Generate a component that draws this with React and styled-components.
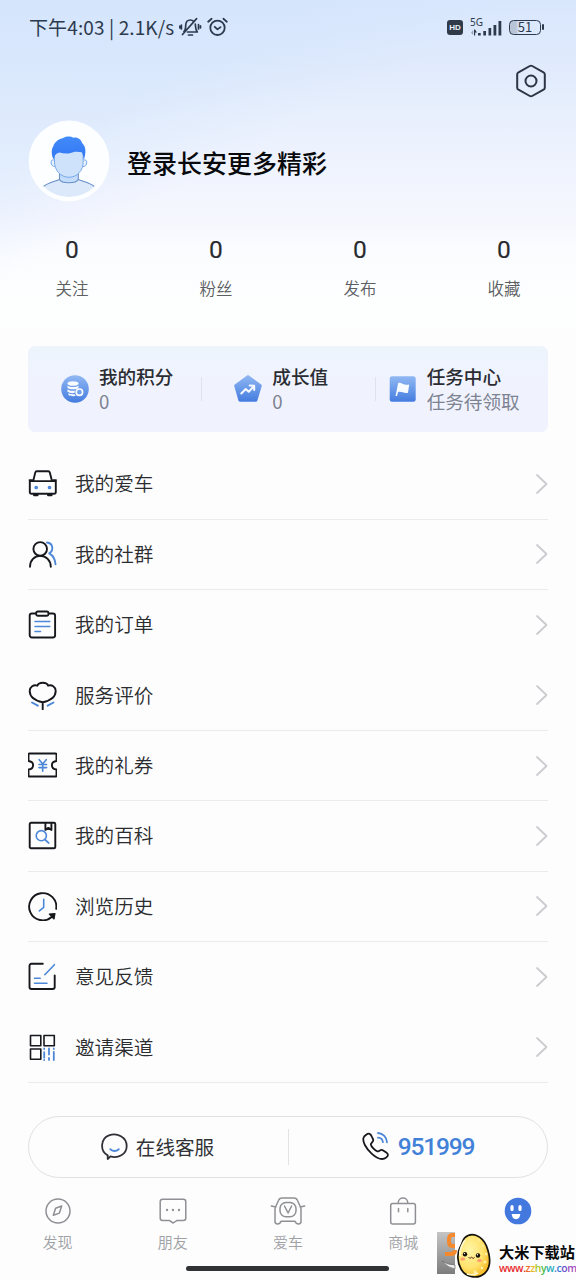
import React from "react";
import styled, { createGlobalStyle, css } from "styled-components";

const Global = createGlobalStyle`
  * { box-sizing: border-box; }
  html, body { margin: 0; padding: 0; }
  body {
    background: #fdfdfe;
    font-family: "Noto Sans CJK SC", "Noto Sans", sans-serif;
    color: #303134;
  }
  svg { display: block; flex: none; }
`;

const Screen = styled.main`
  position: relative;
  width: 576px;
  height: 1280px;
  overflow: hidden;
  display: flex;
  flex-direction: column;
  background:
    linear-gradient(152deg, rgba(205, 226, 252, 0.35) 0, rgba(207, 227, 252, 0.4) 150px, rgba(225, 238, 253, 0) 250px),
    linear-gradient(180deg, #d9e7fd 0, #dfeafc 60px, #e9f0fd 120px, #f0f4fe 175px, #f6f7fe 222px, #fbfcff 250px, #fdfefe 300px, #fdfdfe 340px);
`;

const StatusBar = styled.header`
  height: 54px;
  padding: 0 32px 0 29px;
  display: flex;
  align-items: center;
  justify-content: space-between;
  color: #2d3a4d;
`;

const StatusGroup = styled.div`
  display: flex;
  align-items: center;
  gap: ${(p) => p.$gap}px;
`;

const StatusText = styled.span`
  font-size: 19px;
  line-height: 26px;
  width: 145px;
  white-space: nowrap;
  letter-spacing: 0.12px;
`;

const Toolbar = styled.div`
  height: 54px;
  padding: 0 29px;
  display: flex;
  align-items: center;
  justify-content: flex-end;
`;

const Profile = styled.section`
  height: 106px;
  padding-left: 28px;
  display: flex;
  align-items: center;
  gap: 17px;
`;

const ProfileTitle = styled.h1`
  margin: 0 0 -2px;
  font-size: 25px;
  line-height: 36px;
  font-weight: 500;
  color: #08090c;
`;

const Stats = styled.section`
  display: grid;
  grid-template-columns: repeat(4, 1fr);
  padding-top: 19px;
  height: 132px;
`;

const Stat = styled.div`
  display: flex;
  flex-direction: column;
  align-items: center;
`;

const StatValue = styled.span`
  font-family: Roboto, sans-serif;
  font-size: 24.5px;
  line-height: 34px;
  font-weight: 400;
  -webkit-text-stroke: 0.15px;
  color: #292b2f;
`;

const StatLabel = styled.span`
  margin-top: 8px;
  font-size: 16.5px;
  line-height: 26px;
  font-weight: 350;
  color: #5c5e62;
`;

const Points = styled.section`
  margin: 0 28px;
  height: 86px;
  border-radius: 7px;
  background: linear-gradient(180deg, #edf4fc, #f0f3fe 45%, #f0f2fe);
  display: grid;
  grid-template-columns: repeat(3, 1fr);
  align-items: center;
`;

const Point = styled.div`
  display: flex;
  align-items: center;
  gap: 10px;
  height: 24px;
  padding-left: ${(p) => p.$inset}px;
  border-left: 1px solid ${(p) => (p.$divided ? "#e0e3ed" : "transparent")};
`;

const PointCopy = styled.div`
  display: flex;
  flex-direction: column;
  white-space: nowrap;
  padding-bottom: 2px;
`;

const PointTitle = styled.span`
  font-size: 18.6px;
  line-height: 25px;
  font-weight: 500;
  color: #2a2c31;
`;

const PointNote = styled.span`
  font-size: 18.6px;
  line-height: 25px;
  color: #7d8391;
`;

const Menu = styled.nav`
  margin: 17.3px 28px 0;
  display: flex;
  flex-direction: column;
`;

const MenuRow = styled.a`
  height: 70.4px;
  display: flex;
  align-items: center;
  border-bottom: 1px solid ${(p) => (p.$line ? "#ebebed" : "transparent")};
`;

const MenuText = styled.span`
  flex: 1;
  margin-left: 18px;
  padding-bottom: 1px;
  font-size: 19.6px;
  line-height: 30px;
  font-weight: 350;
  color: #2b2c2f;
`;

const Service = styled.section`
  margin: 32.7px 28px 0;
  height: 62px;
  flex: none;
  border: 1px solid #e0e1e4;
  border-radius: 31px;
  display: grid;
  grid-template-columns: 1fr 1fr;
  align-items: center;
`;

const ServiceItem = styled.div`
  height: 36px;
  display: flex;
  align-items: center;
  justify-content: center;
  gap: 8px;
  padding-right: 2px;
  font-size: 19.6px;
  color: #323336;
  ${(p) => p.$phone && css`
    padding-right: 0;
    border-left: 1px solid #e2e3e6;
    font-family: Roboto, sans-serif;
    font-size: 24.5px;
    letter-spacing: -1.2px;
    font-weight: 500;
    color: #4281d8;
  `}
`;

const Tabs = styled.nav`
  height: 88px;
  display: grid;
  grid-template-columns: repeat(5, 1fr);
  padding-top: 16px;
`;

const Tab = styled.div`
  display: flex;
  flex-direction: column;
  align-items: center;
  gap: 2px;
  font-size: 15px;
  line-height: 24px;
  font-weight: 350;
  color: #a0a1a5;
`;

const HomeBar = styled.div`
  flex: none;
  width: 203px;
  height: 5px;
  border-radius: 3px;
  background: #313234;
  margin-left: 186px;
`;

const Watermark = styled.aside`
  position: absolute;
  left: 437px;
  top: 1232px;
  display: flex;
  width: 139px;
`;

const WatermarkCopy = styled.div`
  margin-left: 7px;
  padding-top: 8px;
  display: flex;
  flex-direction: column;
  white-space: nowrap;
`;

const WatermarkName = styled.strong`
  font-size: 15.2px;
  line-height: 22px;
  font-weight: 700;
  color: #090909;
`;

const WatermarkUrl = styled.span`
  font-family: "Open Sans", sans-serif;
  font-size: 10.4px;
  line-height: 13px;
  font-weight: 600;
  letter-spacing: -0.42px;
`;

const Letter = styled.span`
  color: ${(p) => p.$color};
`;

const INK = "#17181c";
const BLUE = "#4c87d8";

const Icon = ({ w = 28, h = 28, box, children, stroke = INK, sw = 1.9 }) => (
  <svg width={w} height={h} viewBox={box || `0 0 ${w} ${h}`} fill="none" stroke={stroke} strokeWidth={sw} strokeLinecap="round" strokeLinejoin="round">
    {children}
  </svg>
);

const MuteBell = () => (
  <Icon w={24} h={20} stroke="currentColor" sw={1.7}>
    <path d="M5 14.5c1.5-1.3 1.7-2.8 1.7-6.2C6.8 5.1 8.7 3 11.4 3c1.3 0 2.4.5 3.2 1.3M16.3 7.1c.3 3.5.2 5.6 2 7.9H8.5M9.5 18h4M3.5 17.5 17.6 1.6M2.4 8v4M.8 9.2v1.8M19.5 7.5v4.5M21.5 8.8v2" />
  </Icon>
);

const Alarm = () => (
  <Icon w={21} h={20} stroke="currentColor" sw={1.8}>
    <circle cx="10.5" cy="10.8" r="7.2" />
    <path d="m7.7 9.8 2.8 2.6 3-2.3M1.2 4.7l3.4-2.9M19.8 4.7l-3.4-2.9" />
  </Icon>
);

const Badge = styled.span`
  width: 16px;
  height: 15px;
  border-radius: 3px;
  background: #303a48;
  color: #eaf1fc;
  font: 700 8px/15px "Liberation Sans", sans-serif;
  text-align: center;
`;

const NetworkName = styled.div`
  font: 400 10px/10px "Noto Sans", sans-serif;
  height: 19px;
  margin-top: -1px;
`;

const Battery = styled.div`
  width: 32px;
  height: 15px;
  border: 1.6px solid #2d3a4d;
  border-radius: 4.5px;
  font: 400 13px/12px "Noto Sans CJK SC", sans-serif;
  text-align: center;
  background: linear-gradient(90deg, #b9c5d6 0 6px, transparent 9px);
`;

const BatteryTip = styled.i`
  width: 2px;
  height: 6px;
  border-radius: 1px;
  background: #2d3a4d;
`;

const Signal = () => (
  <svg width="32" height="19" viewBox="0 0 32 19" fill="currentColor">
    <path d="M1 14.7 3.2 12v5Z" opacity=".4" />
    <path d="M4 11.5v6h1.2v-3H7l-2-3ZM8 15h2.7v2.5H8Zm5.3-2H16v4.5h-2.7Zm5.2-3h2.7v7.5h-2.7Zm5-3h2.8v10.5h-2.8Zm5-4h2.8v14.5h-2.8Z" />
  </svg>
);

const NetworkMark = styled.div`
  display: grid;
  width: 32px;
  height: 19px;
  & > * { grid-area: 1 / 1; }
`;

const Avatar = () => (
  <svg width="82" height="82" viewBox="0 0 82 82">
    <defs>
      <clipPath id="portrait"><circle cx="41" cy="41" r="36" /></clipPath>
      <linearGradient id="hair" x2="0" y2="1"><stop stopColor="#438afa" /><stop offset="1" stopColor="#3178f3" /></linearGradient>
    </defs>
    <circle cx="41" cy="41" r="40.4" fill="#fdfeff" />
    <g clipPath="url(#portrait)">
      <path d="M16 66c5-3.7 10.5-4.6 15.5-6.5h18.7c5 2 10.8 3 16.3 6.5L60 77H22Z" fill="#dbe9fb" />
      <path d="M31.5 51v8c0 5 18.5 5 18.5 0v-8Z" fill="#c3dcfa" />
      <path d="M31.5 53v6.5c-4.5 2-11.5 3.2-16 7M50.3 53v6.5c4.5 2 11.5 3.2 16 7M31.5 59.5c2 4.3 16.5 4.3 18.8 0" fill="none" stroke="#688fc6" strokeWidth="1.1" />
    </g>
    <path d="M25.8 40c-4-1.3-3.5 7 1 6.5M56 40c4-1.3 3.5 7-1 6.5" fill="#e8f2fd" stroke="#72a7ed" />
    <path d="M26.5 30h28.7v12c0 8-5.7 15.3-14.2 15.3S26.5 50 26.5 42Z" fill="#cfe2fb" stroke="#79a9e9" />
    <path d="M25.5 39.5c-2.2-5-2.3-10-.3-13 1.5-5 5.8-7.8 10-8.6 3.5-2 7.5-1.9 10.2-.2 3.8-1 7.7 1.5 8.7 5.2 4.6 4 3.7 11.3 1.7 16.8-.5-2-.5-5-2-7.4-3-.5-5.8-.7-8.7-.1-4.9 2-9.6 1.2-13.7.2-3.8 1-5 3-5.9 7.1Z" fill="url(#hair)" />
  </svg>
);

const PointIcon = ({ kind }) => (
  <svg width="28" height="32" viewBox="0 0 28 32">
    <defs><linearGradient id={`tint-${kind}`} x2="0" y2="1"><stop stopColor="#91b8f3" /><stop offset="1" stopColor="#447cdf" /></linearGradient></defs>
    {kind === "coins" && <>
      <circle cx="14" cy="16" r="13.8" fill="url(#tint-coins)" />
      <g fill="#f8fbff"><ellipse cx="12" cy="10.5" rx="5.5" ry="2.3" /><path d="M6.5 12.5c2 2 9 2 11 0v2.3c-2 2-9 2-11 0Zm0 3.8c2 1.5 5 1.8 7.3 1.2l-.3 2.5c-2 .4-5.4.1-7-1.2Zm1 4c2 1 4.7 1.2 6.3 1l.8 1.7c-2 .3-6 .2-7.1-1Z" /></g>
      <circle cx="18.4" cy="19.2" r="3.2" fill="#71a1ed" stroke="#fafdff" strokeWidth="1.7" />
    </>}
    {kind === "growth" && <>
      <path d="M13 2.4q1-.8 2 0l12.2 9.2q.8.7.5 1.7l-4.3 14.2q-.4 1.2-1.8 1.2H6.2q-1.3 0-1.8-1.2L.3 13.3q-.3-1 .5-1.7Z" fill="url(#tint-growth)" />
      <path d="m7.3 20.5 4.4-4.5 3 2.8 5.2-5.7m-4.2-.5 4.5.2v4.3" fill="none" stroke="#f7fbff" strokeWidth="2" strokeLinecap="round" strokeLinejoin="round" />
    </>}
    {kind === "flag" && <>
      <rect x=".7" y="3.3" width="26" height="25.5" rx="2.3" fill="url(#tint-flag)" />
      <path d="m6.5 23 2.7-13c3-1 5.5 3 11 1.5l-1.2 8.3c-4 1.2-6.8-2-10-.6l-1 3.8Z" fill="#f8fbff" />
    </>}
  </svg>
);

const menuArt = {
  car: <><path d="m4.7 11.6 2.1-8.7q.3-1.2 1.5-1.2h11.5q1.2 0 1.5 1.2l2.2 8.7M1.3 11.6h26v10.9q0 1.8-1.8 1.8H3.1q-1.8 0-1.8-1.8Z" /><path d="M1 10.6h2.7M24.8 10.6h2.7" /><path d="M5.8 25.4h3M19.8 25.4h3" strokeWidth="2.6" /><circle cx="7.7" cy="18" r=".9" fill={BLUE} stroke={BLUE} /><circle cx="21" cy="18" r=".9" fill={BLUE} stroke={BLUE} /></>,
  people: <><circle cx="11.7" cy="8.4" r="6.8" /><path d="M1.5 26.3C1.5 19.5 6 15.4 11.7 15.4S22.3 19.7 22.3 26.3" /><path d="M18.5 2c6.2.6 7 8.2 2.2 10.8 3.5 1.9 6 6 6.3 10.9" stroke={BLUE} /></>,
  clipboard: <><rect x="1.2" y="3" width="25.4" height="24" rx="2.2" /><rect x="7.7" y="1" width="12.2" height="4.2" rx="1.5" fill="white" /><path d="M6.5 11h14.8M6.5 16h14.8M6.5 21h5.5" stroke={BLUE} strokeWidth="1.5" /></>,
  flower: <><path d="M8.9 4.2C5.2 2.8 1.2 5.3 1.2 9.4c0 5.8 5.2 9.6 13 11.4 7.8-1.8 13-5.6 13-11.4 0-4.1-4-6.6-7.6-5.2-1.2-3.9-9.4-3.9-10.7 0ZM14.2 21v6.8" /><path d="m3.5 21 5.8 3.2M25 21l-5.8 3.2" stroke={BLUE} /></>,
  ticket: <><path d="M1 2h26q1 0 1 1v6.5c-2.8.3-4.6 1.8-4.6 4.2s1.8 4 4.6 4.3v6q0 1-1 1H1q-1 0-1-1v-6c2.8-.3 4.6-1.9 4.6-4.3S2.8 9.8 0 9.5V3q0-1 1-1Z" /><path d="m10.7 8.2 3.5 4.2 3.5-4.2M10.5 13h7.6M10.5 16.1h7.6m-3.9-3.7v7.3" stroke={BLUE} strokeWidth="1.6" /></>,
  book: <><rect x="1.2" y="1.2" width="25.6" height="25.6" rx="1.4" /><path d="M16.9 1.5v6.9l3-2 3 2V1.5" /><circle cx="12.8" cy="14.2" r="5.1" stroke={BLUE} strokeWidth="1.6" /><path d="m16.5 18.1 3.6 3.3" stroke={BLUE} /></>,
  history: <><path d="M27.7 16.3A13.6 13.6 0 1 0 23.2 24.5" /><path d="m20.8 21.6 5.7-.6-1 5.5Z" fill={INK} strokeWidth="1.2" /><path d="M15.2 6.7v8.1l-4.3 3.6" stroke={BLUE} strokeWidth="1.6" /></>,
  feedback: <><path d="M14.3 1.3H3q-2 0-2 2v21.2q0 2 2 2h21.2q2 0 2-2V13" /><path d="m16.3 12.2 9.6-10M6 15.7h5.7M6 20.8h12.5" stroke={BLUE} strokeWidth="1.6" /></>,
  qr: <><path d="M2 2h10.3v10.3H2ZM15.5 2h10.3v10.3H15.5ZM2 15.5h10.3v10.3H2Z" strokeWidth="1.6" /><path d="M15.7 15v.5m0 3.2v5.5m0 2.3v.1M20.5 15v6m0 3.5v1.9M25.3 15v.4m0 3.1v8" stroke={BLUE} strokeWidth="1.8" /></>,
};

const tabArt = {
  compass: <><circle cx="17" cy="15" r="12" /><path d="m20.7 10-6.1 2.2-2.3 7 6.1-2.1Z" /></>,
  chat: <><path d="M6.7 3.2h20.6q2.5 0 2.5 2.5v16.2q0 2.5-2.5 2.5h-6.2L17.2 27l-4-2.6H6.7q-2.5 0-2.5-2.5V5.7q0-2.5 2.5-2.5Z" /><path d="M11 14h.1m5.8 0h.1m5.9 0h.1" strokeWidth="2.3" /></>,
  vehicle: <><path d="m4 12.3 3.6-8Q8.4 2 11 2h12q2.6 0 3.4 2.3l3.6 8v13.3q0 2.4-2.5 2.4-2.3 0-3.5-2.8H10q-1 2.8-3.5 2.8Q4 28 4 25.6Zm.8-1.2L.3 10m33.4 0-4.5 1.1" /><rect x="9" y="6.5" width="16" height="14.3" rx="6" /><path d="m13.5 10 3.6 7 3.5-7" /></>,
  bag: <><path d="M6.7 7.5h20.7q2 0 2 2V26q0 2-2 2H6.7q-2 0-2-2V9.5q0-2 2-2ZM12.2 7c0-6.7 9.6-6.7 9.6 0" /><path d="M12.5 12.5v3.2m9.3-3.2v3.2" /></>,
};

const rows = [
  ["car", "我的爱车", true], ["people", "我的社群", true], ["clipboard", "我的订单", false],
  ["flower", "服务评价", true], ["ticket", "我的礼券", true], ["book", "我的百科", true],
  ["history", "浏览历史", true], ["feedback", "意见反馈", false], ["qr", "邀请渠道", true],
];

const Mascot = () => (
  <svg width="55" height="47" viewBox="0 0 55 47">
    <defs>
      <linearGradient id="plate" x2="0" y2="1"><stop stopColor="#c5c5c5" /><stop offset="1" stopColor="#7c7c7c" /></linearGradient>
      <radialGradient id="grain" cx=".38" cy=".38" r=".7"><stop stopColor="#fff5a8" /><stop offset=".6" stopColor="#ffe26b" /><stop offset="1" stopColor="#f7b51e" /></radialGradient>
    </defs>
    <path d="M0 0h18v42H0Z" fill="url(#plate)" />
    <path d="M18 3h-3q-3 0-3 5v2q0 4 4 4h2M8 22h6q4 0 4-4" fill="none" stroke="#f5892d" strokeWidth="4" />
    <path d="M5 29q6 4 13 4v4Q11 36 5 29Z" fill="#f0f0f0" stroke="#686868" strokeWidth=".7" />
    <path d="M27.5 6c7-7 17.5-2.5 22 8 4.5 12 4 22-2 27.5-7 6-19 4-23.5-4.5-4-7-4-16-1-21.5 2-3 2-6 4.5-9.5Z" fill="url(#grain)" stroke="#15120c" strokeWidth="1.7" />
    <path d="M28 8c-3 4-6 11-5 16M30 42c4 1.5 8 .5 11-1" fill="none" stroke="#fffbd1" strokeWidth="1.7" />
    <g fill="#fff1a8"><circle cx="46" cy="14" r="1" /><circle cx="49" cy="22" r="1.3" /><circle cx="48" cy="30" r="1.5" /><circle cx="45" cy="36" r="1.3" /><circle cx="38" cy="40" r="1.4" /><circle cx="42" cy="8" r="1" /></g>
    <g fill="#17100b"><circle cx="28" cy="22.3" r="2.2" /><circle cx="41" cy="23.5" r="2.2" /></g>
    <circle cx="27.5" cy="21.6" r=".7" fill="white" /><circle cx="40.5" cy="22.8" r=".7" fill="white" />
    <path d="M31.5 25q1.4 2.8 3 .2 1.8 2.5 3.1.1" fill="none" stroke="#5b2715" strokeWidth="1" />
    <g fill="#ff9a70"><ellipse cx="25.8" cy="27" rx="2.4" ry="1.5" /><ellipse cx="42.5" cy="28.5" rx="2.4" ry="1.5" /></g>
  </svg>
);

const urlParts = [["www.", "#e52a2b"], ["z", "#ed6b25"], ["z", "#e4b72b"], ["h", "#a5c629"], ["y", "#47bd4a"], ["w", "#28aeba"], [".", "#307bc7"], ["c", "#3979d4"], ["o", "#6950c6"], ["m", "#a14bc0"]];

export default function App() {
  return (
    <>
      <Global />
      <Screen>
        <StatusBar>
          <StatusGroup $gap={4.5}>
            <StatusText>下午4:03 | 2.1K/s</StatusText>
            <MuteBell /><Alarm />
          </StatusGroup>
          <StatusGroup $gap={7}>
            <Badge>HD</Badge>
            <NetworkMark><NetworkName>5G</NetworkName><Signal /></NetworkMark>
            <StatusGroup $gap={1}><Battery>51</Battery><BatteryTip /></StatusGroup>
          </StatusGroup>
        </StatusBar>
        <Toolbar>
          <Icon w={32} h={34} stroke="#2d3444" sw={2}>
            <path d="m14.8 2-11.3 6.3Q2.2 9 2.2 10.3v13.4q0 1.3 1.3 2L14.8 32q1.2.7 2.4 0l11.3-6.3q1.3-.7 1.3-2V10.3q0-1.3-1.3-2L17.2 2q-1.2-.7-2.4 0Z" />
            <circle cx="16" cy="17" r="5.5" />
          </Icon>
        </Toolbar>
        <Profile><Avatar /><ProfileTitle>登录长安更多精彩</ProfileTitle></Profile>
        <Stats>
          {["关注", "粉丝", "发布", "收藏"].map((label) => (
            <Stat key={label}><StatValue>0</StatValue><StatLabel>{label}</StatLabel></Stat>
          ))}
        </Stats>
        <Points>
          <Point $inset={32}><PointIcon kind="coins" /><PointCopy><PointTitle>我的积分</PointTitle><PointNote>0</PointNote></PointCopy></Point>
          <Point $inset={32} $divided><PointIcon kind="growth" /><PointCopy><PointTitle>成长值</PointTitle><PointNote>0</PointNote></PointCopy></Point>
          <Point $inset={13} $divided><PointIcon kind="flag" /><PointCopy><PointTitle>任务中心</PointTitle><PointNote>任务待领取</PointNote></PointCopy></Point>
        </Points>
        <Menu>
          {rows.map(([art, label, line]) => (
            <MenuRow key={art} $line={line}>
              <Icon w={29} h={29} box="-.5 -.5 29 29">{menuArt[art]}</Icon>
              <MenuText>{label}</MenuText>
              <Icon w={13} h={22} stroke="#cbcccf" sw={1.8}><path d="m2 2 9.5 9L2 20" /></Icon>
            </MenuRow>
          ))}
        </Menu>
        <Service>
          <ServiceItem>
            <Icon w={27} h={28} stroke="#303136" sw={1.8}>
              <path d="M6.7 22.4C-1.5 17.8-.4 5.6 8 2.4c8.2-3.2 17.7 2 17.7 10.6S16.8 25.6 9.4 23.4L6.7 26Z" />
              <path d="M9.3 16.2q4.3 3.6 8.5 0" stroke={BLUE} />
            </Icon>
            在线客服
          </ServiceItem>
          <ServiceItem $phone>
            <Icon w={28} h={29} sw={1.8}>
              <path d="M4.5 2.5c2.2-1.7 4.1-.7 5.2 1.8l1.4 3c1 2.3-2.2 3.4-2.3 5 .3 2.2 4.2 6.4 6.6 7.1 1.8.2 3.2-2.5 5.4-1.2l3.5 2.4c2.2 1.5 2.1 3.1.1 4.8-3.8 3.1-9.4 1-14.5-3.6C3.6 16.2.2 9.3 1.6 5.5c.4-1.2 1.5-2 2.9-3Z" />
              <path d="M16 1c5 .3 8.8 4.2 9 9.3M16 5.7c2.7.2 4.7 2 4.9 4.5" stroke={BLUE} />
            </Icon>
            951999
          </ServiceItem>
        </Service>
        <Tabs>
          {[["compass", "发现"], ["chat", "朋友"], ["vehicle", "爱车"], ["bag", "商城"]].map(([art, label]) => (
            <Tab key={art}><Icon w={36} h={34} box="-1 -2 36 34" stroke="#8f9093" sw={1.5}>{tabArt[art]}</Icon>{label}</Tab>
          ))}
          <Tab>
            <svg width="30" height="34" viewBox="0 0 30 34">
              <circle cx="15" cy="17" r="13.3" fill="#4379df" />
              <path d="M9 12.7v2.8m8-2.8v2.8" stroke="white" strokeWidth="3.2" strokeLinecap="round" />
              <path d="M8.7 20h8.6q-.5 5.2-4.3 5.2T8.7 20Z" fill="white" />
            </svg>
          </Tab>
        </Tabs>
        <HomeBar />
        <Watermark>
          <Mascot />
          <WatermarkCopy>
            <WatermarkName>大米下载站</WatermarkName>
            <WatermarkUrl>{urlParts.map(([text, color], i) => <Letter key={i} $color={color}>{text}</Letter>)}</WatermarkUrl>
          </WatermarkCopy>
        </Watermark>
      </Screen>
    </>
  );
}
